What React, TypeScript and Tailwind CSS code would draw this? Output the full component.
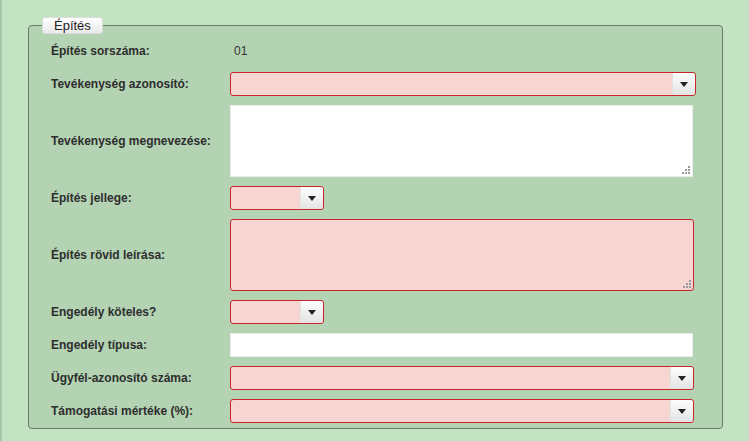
import type { ReactNode } from "react";

function Arrow() {
  return (
    <div className="flex h-full w-[23px] items-center justify-center rounded-r-[3px] border-l border-[#e2e2e2] bg-gradient-to-b from-[#fdfdfd] to-[#e4e4e4]">
      <svg width="8" height="5" viewBox="0 0 8 5">
        <path d="M0 0h8L4 5z" fill="#222" />
      </svg>
    </div>
  );
}

function Grip() {
  return (
    <svg className="absolute bottom-[2px] right-[2px]" width="9" height="9" viewBox="0 0 9 9">
      <g fill="#9a9a9a">
        <rect x="7" y="1" width="2" height="2" />
        <rect x="4" y="4" width="2" height="2" />
        <rect x="7" y="4" width="2" height="2" />
        <rect x="1" y="7" width="2" height="2" />
        <rect x="4" y="7" width="2" height="2" />
        <rect x="7" y="7" width="2" height="2" />
      </g>
    </svg>
  );
}

function Select({ width }: { width: string }) {
  return (
    <div
      className={`flex h-[24px] justify-end rounded-[3px] border border-[#c8262a] bg-[#f6d5d3] ${width}`}
    >
      <Arrow />
    </div>
  );
}

function Row({ label, children, tall }: { label: string; children: ReactNode; tall?: boolean }) {
  return (
    <div className={`flex items-center ${tall ? "h-[72px]" : "h-[24px]"}`}>
      <div className="w-[179px] shrink-0 text-[12px] font-bold text-[#2e2e2e]">{label}</div>
      {children}
    </div>
  );
}

export default function App() {
  return (
    <div className="h-[441px] w-[749px] border-l-2 border-[#a8c6a8] bg-[#c3e3c3] pl-[26px] pr-[26px] pt-[17px] font-['Liberation_Sans',Arial,sans-serif]">
      <fieldset className="h-[412px] w-[695px] rounded-[4px] border border-[#6c7c6c] bg-[#b3d3b3] pl-[12px] pr-[12px]">
        <legend className="ml-[1px] rounded-[3px] border border-[#dcdcdc] bg-gradient-to-b from-[#ffffff] to-[#e9e9e9] px-[11px] text-[13px] leading-[15px] text-[#222]">
          Építés
        </legend>
        <div className="flex flex-col gap-[9px] pl-[10px] pt-[5px]">
          <Row label="Építés sorszáma:">
            <span className="pl-[4px] text-[12px] text-[#333]">01</span>
          </Row>
          <Row label="Tevékenység azonosító:">
            <Select width="w-[466px]" />
          </Row>
          <Row label="Tevékenység megnevezése:" tall>
            <div className="relative h-[72px] w-[463px] border border-[#e8efe8] bg-white">
              <Grip />
            </div>
          </Row>
          <Row label="Építés jellege:">
            <Select width="w-[94px]" />
          </Row>
          <Row label="Építés rövid leírása:" tall>
            <div className="relative h-[72px] w-[464px] rounded-[3px] border border-[#c8262a] bg-[#f6d5d3]">
              <Grip />
            </div>
          </Row>
          <Row label="Engedély köteles?">
            <Select width="w-[94px]" />
          </Row>
          <Row label="Engedély típusa:">
            <div className="h-[24px] w-[463px] border border-[#e8efe8] bg-white" />
          </Row>
          <Row label="Ügyfél-azonosító száma:">
            <Select width="w-[464px]" />
          </Row>
          <Row label="Támogatási mértéke (%):">
            <Select width="w-[464px]" />
          </Row>
        </div>
      </fieldset>
    </div>
  );
}
